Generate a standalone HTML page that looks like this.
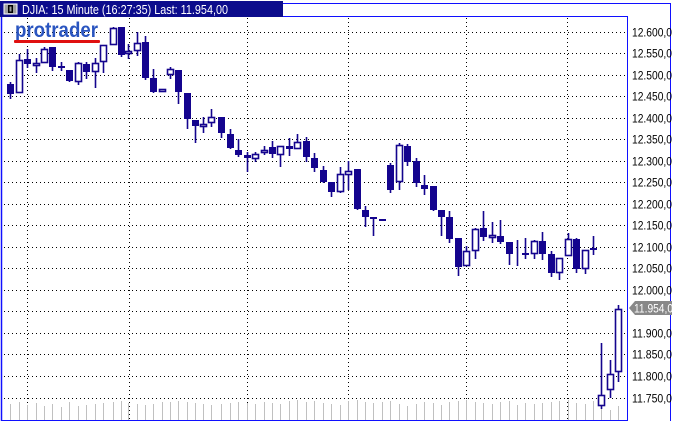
<!DOCTYPE html>
<html><head><meta charset="utf-8">
<style>
html,body{margin:0;padding:0;background:#fff;width:676px;height:422px;overflow:hidden}
svg{display:block}
text{font-family:"Liberation Sans",sans-serif}
</style></head>
<body>
<svg id="s" width="676" height="422" xmlns="http://www.w3.org/2000/svg">
<rect x="0" y="0" width="676" height="422" fill="#fff"/>
<g id="grid"></g>
<g id="vol"></g>
<g id="cand"></g>
<line x1="283" y1="3.5" x2="670.5" y2="3.5" stroke="#1010ff" stroke-width="1"/>
<line x1="670.5" y1="3" x2="670.5" y2="421" stroke="#1010ff" stroke-width="1"/>
<line x1="283" y1="16.5" x2="627.5" y2="16.5" stroke="#1010ff" stroke-width="1"/>
<line x1="627.5" y1="16" x2="627.5" y2="421" stroke="#1010ff" stroke-width="1"/>
<line x1="1.5" y1="17" x2="1.5" y2="421" stroke="#1010ff" stroke-width="1.5"/>
<line x1="1" y1="420.5" x2="628" y2="420.5" stroke="#1010ff" stroke-width="1"/>
<rect x="0" y="1" width="283" height="16" fill="#0c0c8c"/>
<rect x="4" y="4" width="13" height="10" fill="#a0a0a0" stroke="#fff" stroke-width="1"/>
<rect x="8" y="5" width="5" height="8" fill="#000"/>
<rect x="9.5" y="6.5" width="2" height="5" fill="#a0a0a0"/>
<text x="22" y="14" font-size="12.5" fill="#fff" textLength="206" lengthAdjust="spacingAndGlyphs">DJIA: 15 Minute (16:27:35) Last: 11.954,00</text>
<text x="15" y="37" font-size="21" font-weight="bold" fill="#2a55c0" textLength="83" lengthAdjust="spacingAndGlyphs">protrader</text>
<rect x="14" y="40" width="86" height="3" fill="#e01010" rx="1"/>
<g id="lab" font-size="12" fill="#000"></g>
<polygon points="629,308 635,301 672,301 672,315 635,315" fill="#888"/>
<text x="634" y="312.5" font-size="12" fill="#fff" textLength="39" lengthAdjust="spacingAndGlyphs">11.954,0</text>
</svg>
<script>
var NS="http://www.w3.org/2000/svg";
function el(p,t,a){var e=document.createElementNS(NS,t);for(var k in a)e.setAttribute(k,a[k]);p.appendChild(e);return e;}
var g=document.getElementById('grid');
for(var k=0;k<18;k++){var y=Math.round(31.5+21.53*k)+0.5;
 el(g,'line',{x1:4,y1:y,x2:626,y2:y,stroke:'#000','stroke-width':1,'stroke-dasharray':'1 3'});}
[27,129,247,348,466,567].forEach(function(x){el(g,'line',{x1:x+0.5,y1:18,x2:x+0.5,y2:420,stroke:'#000','stroke-width':1,'stroke-dasharray':'1 3'});});
var lab=document.getElementById('lab');
var p=12600;
for(var k=0;k<18;k++){var y=Math.round(31.5+21.53*k)+4.5;var v=p-50*k;
 if(v===11950)continue;
 var t=Math.floor(v/1000)+'.'+String(v%1000).padStart(3,'0')+',0';
 var e=el(lab,'text',{x:632,y:y,textLength:40,lengthAdjust:'spacingAndGlyphs'});e.textContent=t;}
var C=[
[10,82,99,84,94,1],[19,54,93,60,93,0],[27,49,68,59,64,1],[36,58,73,63,66,0],[44,47,63,49,63,0],[52,47,71,47,67,1],[61,62,71,67,69,2],[69,70,82,70,81,1],[78,62,85,63,82,0],[86,62,79,64,72,1],[95,58,88,63,72,0],[103,45,73,45,62,0],[113,27,45,28,45,0],[121,27,57,27,55,1],[128,44,59,51,54,0],[137,32,56,43,51,0],[145,36,80,42,78,1],[153,69,93,78,92,1],[162,89,91,89,91,0],[170,67,79,69,75,0],[178,70,104,70,92,1],[187,93,129,93,119,1],[195,120,143,120,126,1],[203,117,133,124,127,0],[211,109,127,117,123,0],[221,117,138,117,133,1],[230,129,149,134,148,1],[238,139,157,150,155,1],[247,152,172,155,158,1],[255,152,162,154,159,0],[264,146,155,150,153,0],[272,141,158,147,154,1],[280,146,167,146,155,0],[289,138,156,146,149,1],[297,134,149,142,149,0],[306,137,162,141,157,1],[314,153,172,158,168,1],[323,166,183,170,182,1],[331,182,197,182,192,1],[340,167,193,174,192,0],[348,161,190,171,175,0],[357,169,210,169,209,1],[365,206,227,210,217,1],[373,217,236,218,218,2],[382,219,221,220,220,2],[390,163,193,165,190,1],[399,143,190,145,182,0],[407,144,166,146,162,1],[416,158,187,161,183,1],[424,175,195,185,189,1],[433,186,211,186,210,1],[441,210,236,210,217,1],[449,211,243,217,239,1],[458,238,276,238,267,1],[466,246,266,251,266,0],[475,228,259,229,251,0],[483,211,241,228,237,1],[492,222,243,235,237,0],[500,220,244,236,242,1],[509,242,265,242,254,1],[517,240,266,253,253,3],[525,238,259,253,255,1],[534,240,259,241,254,0],[542,232,260,241,254,1],[551,251,277,254,273,1],[559,258,280,258,273,0],[568,233,256,239,256,0],[576,238,273,239,269,1],[585,250,274,250,269,0],[593,236,255,248,250,1],[601,343,409,395,406,0],[610,360,398,374,390,0],[618,305,382,309,372,0]];
var cg=document.getElementById('cand'),vg=document.getElementById('vol');
var col='#14048e';
C.forEach(function(c,i){var x=c[0];
 var vt=[404,402,405,403,406,404,407,402,406,405,404,403,402,401,403,404,405,404,402,402,401,402,403,404,405,404,403,402,403,404,402,403,404,401,400,402,401,403,404,405,401,400,402,403,402,401,404,406,404,402,403,405,402,401,400,402,403,404,402,401,405,403,404,403,402,401,400,403,404,401,402,410,406,403][i%74];
 el(vg,'line',{x1:x+0.5,y1:vt,x2:x+0.5,y2:420,stroke:'#c0c0c0','stroke-width':1});
 el(cg,'line',{x1:x+0.5,y1:c[1],x2:x+0.5,y2:c[2],stroke:col,'stroke-width':1.6});
 var h=Math.max(c[4]-c[3],1);
 if(c[5]==1){el(cg,'rect',{x:x-3,y:c[3],width:7,height:Math.max(h,2),fill:col});}
 else if(c[5]==0){el(cg,'rect',{x:x-2.5,y:c[3]+0.5,width:6,height:Math.max(h-1,2),fill:'#fff',stroke:col,'stroke-width':1.6});}
 else if(c[5]==2){el(cg,'rect',{x:x-3,y:c[3]-1,width:7,height:2,fill:col});}
});
</script>
</body></html>
